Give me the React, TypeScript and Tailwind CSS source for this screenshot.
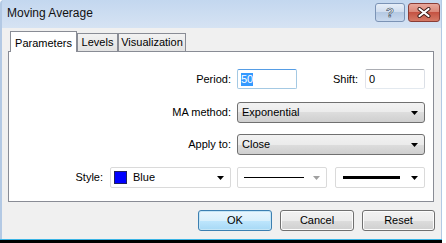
import React from "react";

const Arrow = ({ color = "#000" }: { color?: string }) => (
  <svg width="7" height="4" viewBox="0 0 7 4" className="block">
    <polygon points="0,0 7,0 3.5,4" fill={color} />
  </svg>
);

const TextBox = ({ value, focused, selected }: { value: string; focused?: boolean; selected?: boolean }) => (
  <div
    className={
      "w-[60px] h-[20px] bg-white border rounded-[2px] flex items-center px-[3px] " +
      (focused
        ? "border-[#a4c9e3] border-t-[#569de5]"
        : "border-[#e3e9ef] border-t-[#abadb3] border-l-[#e2e3ea] border-r-[#dbdfe6]")
    }
  >
    <span className={selected ? "bg-[#3399ff] text-white leading-[13px]" : "leading-[13px]"}>{value}</span>
  </div>
);

const Combo = ({ value }: { value: string }) => (
  <div className="w-[188px] h-[21px] rounded-[3px] border border-[#707070] bg-[linear-gradient(#f2f2f2_0%,#ebebeb_50%,#dddddd_50%,#cfcfcf_100%)] flex items-center pl-[4px] pr-[6px]">
    <span className="flex-1">{value}</span>
    <Arrow />
  </div>
);

const Btn = ({ label, def, w = "w-[74px]" }: { label: string; def?: boolean; w?: string }) => (
  <div
    className={
      w +
      " h-[21px] rounded-[3px] border flex items-center justify-center " +
      (def
        ? "border-[#3c7fb1] bg-[linear-gradient(#eaf6fd_0%,#d9f0fc_50%,#bee6fd_50%,#a7d9f5_100%)] shadow-[inset_0_0_0_1px_#c4e5f6]"
        : "border-[#707070] bg-[linear-gradient(#f2f2f2_0%,#ebebeb_50%,#dddddd_50%,#cfcfcf_100%)] shadow-[inset_0_0_0_1px_#fcfcfc]")
    }
  >
    {label}
  </div>
);

export default function App() {
  return (
    <div
      className="w-[446px] h-[243px] bg-white overflow-hidden text-[11px] text-black"
      style={{ fontFamily: '"Liberation Sans", Arial, sans-serif' }}
    >
      <div className="w-[442px] h-[243px] flex flex-col">
        {/* Title bar */}
        <div className="h-[28px] flex items-start bg-[linear-gradient(#c3d7ef,#d6e3f3)] border-l-2 border-r border-[#b3c9e4] rounded-tl-[4px]">
          <div className="pl-[5px] pt-[6px] text-[12px] leading-[14px] text-[#111]">Moving Average</div>
          <div className="ml-auto flex gap-[3px] pt-[3px] pr-[1px]">
            <div className="w-[30px] h-[19px] rounded-[3px] border border-[#7b93b5] bg-[linear-gradient(#e6eef8_0%,#cfdcee_50%,#b5c9e3_50%,#c9d9ee_100%)] flex items-center justify-center">
              <span
                className="text-white font-bold text-[13px] leading-none"
                style={{ WebkitTextStroke: "0.6px #2f3f56" }}
              >
                ?
              </span>
            </div>
            <div className="w-[32px] h-[19px] rounded-[3px] border border-[#8a3d36] bg-[linear-gradient(#e8a89c_0%,#d98576_50%,#c55343_50%,#d57a66_100%)] flex items-center justify-center">
              <svg width="14" height="11" viewBox="0 0 14 11">
                <path d="M2.5 2 L11.5 9 M11.5 2 L2.5 9" stroke="#3b1a16" strokeWidth="4" strokeLinecap="round" />
                <path d="M2.5 2 L11.5 9 M11.5 2 L2.5 9" stroke="#fff" strokeWidth="2.2" strokeLinecap="round" />
              </svg>
            </div>
          </div>
        </div>

        {/* Body */}
        <div className="flex-1 bg-[#f0f0f0] border-l-2 border-r border-[#b3c9e4] flex flex-col">
          {/* Tabs */}
          <div className="h-[23px] flex items-end pl-[8px]">
            <div className="relative z-10 h-[21px] w-[67px] translate-y-[1px] bg-white border border-b-0 border-[#898c95] flex items-start justify-center pt-[3px]">
              Parameters
            </div>
            <div className="h-[18px] w-[41px] border border-b-0 border-[#898c95] bg-[linear-gradient(#f2f2f2,#e3e3e3)] flex items-center justify-center">
              Levels
            </div>
            <div className="h-[18px] w-[68px] border border-b-0 border-[#898c95] bg-[linear-gradient(#f2f2f2,#e3e3e3)] flex items-center justify-center">
              Visualization
            </div>
          </div>

          {/* Panel */}
          <div className="ml-[6px] w-[426px] h-[151px] border border-[#898c95] bg-white pt-[17px] pr-[8px] flex flex-col">
            <div className="h-[20px] flex justify-end items-center">
              <span>Period:</span>
              <div className="ml-[6px]">
                <TextBox value="50" focused selected />
              </div>
              <div className="w-[128px] flex justify-end items-center">
                <span>Shift:</span>
                <div className="ml-[7px]">
                  <TextBox value="0" />
                </div>
              </div>
            </div>
            <div className="mt-[13px] flex justify-end items-center">
              <span>MA method:</span>
              <div className="ml-[6px]">
                <Combo value="Exponential" />
              </div>
            </div>
            <div className="mt-[11px] flex justify-end items-center">
              <span>Apply to:</span>
              <div className="ml-[6px]">
                <Combo value="Close" />
              </div>
            </div>
            <div className="mt-[12px] flex justify-end items-center">
              <span>Style:</span>
              <div className="ml-[7px] w-[121px] h-[21px] bg-white border border-[#dadada] rounded-[2px] flex items-center pl-[3px] pr-[6px]">
                <div className="w-[13px] h-[13px] bg-[#0000ff] border border-[#202060]" />
                <span className="ml-[6px] flex-1">Blue</span>
                <Arrow />
              </div>
              <div className="ml-[6px] w-[90px] h-[21px] bg-white border border-[#dadada] rounded-[2px] flex items-center pl-[6px] pr-[6px]">
                <div className="w-[60px] h-px bg-black" />
                <div className="flex-1" />
                <Arrow color="#a0a0a0" />
              </div>
              <div className="ml-[8px] w-[90px] h-[21px] bg-white border border-[#dadada] rounded-[2px] flex items-center pl-[7px] pr-[6px]">
                <div className="w-[57px] h-[3px] bg-black" />
                <div className="flex-1" />
                <Arrow />
              </div>
            </div>
          </div>

          {/* Buttons */}
          <div className="mt-[8px] flex justify-end gap-[8px] pr-[6px]">
            <Btn label="OK" def />
            <Btn label="Cancel" />
            <Btn label="Reset" w="w-[73px]" />
          </div>
        </div>
        <div className="h-px bg-[#3ab4e5]" />
        <div className="h-[3px] bg-black" />
      </div>
    </div>
  );
}
